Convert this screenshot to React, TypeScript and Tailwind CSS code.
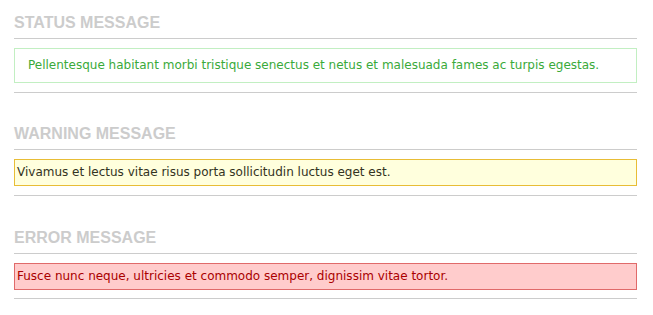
import React from 'react';

const sans = { fontFamily: '"DejaVu Sans", Verdana, sans-serif' };

const Heading: React.FC<{ children: React.ReactNode }> = ({ children }) => (
  <h2 className="pt-[2px] text-[16px] leading-[20px] font-bold uppercase text-[#cccccc] font-['Liberation_Sans',Arial,sans-serif]">
    {children}
  </h2>
);

const Rule: React.FC = () => <div className="h-px bg-[#cccccc]" />;

export default function App() {
  return (
    <div className="bg-white min-h-screen pl-[14px] pr-[16px] pt-[11px]">
      {/* Status */}
      <section>
        <Heading>Status message</Heading>
        <div className="mt-[5px]">
          <Rule />
        </div>
        <div
          className="mt-[9px] mb-[9px] border border-[#c2efc2] px-[13px] py-[9px] text-[12px] leading-[15px] text-[#3aaa3a]"
          style={sans}
        >
          Pellentesque habitant morbi tristique senectus et netus et malesuada fames ac turpis egestas.
        </div>
        <Rule />
      </section>

      {/* Warning */}
      <section className="mt-[29px]">
        <Heading>Warning message</Heading>
        <div className="mt-[5px]">
          <Rule />
        </div>
        <div
          className="mt-[9px] mb-[9px] border border-[#e8bd36] bg-[#ffffdd] px-[2px] py-[5px] text-[12px] leading-[15px] text-[#333322]"
          style={sans}
        >
          Vivamus et lectus vitae risus porta sollicitudin luctus eget est.
        </div>
        <Rule />
      </section>

      {/* Error */}
      <section className="mt-[30px]">
        <Heading>Error message</Heading>
        <div className="mt-[5px]">
          <Rule />
        </div>
        <div
          className="mt-[9px] mb-[8px] border border-[#e06a6a] bg-[#ffcccc] px-[2px] py-[5px] text-[12px] leading-[15px] text-[#aa0000]"
          style={sans}
        >
          Fusce nunc neque, ultricies et commodo semper, dignissim vitae tortor.
        </div>
        <Rule />
      </section>
    </div>
  );
}
